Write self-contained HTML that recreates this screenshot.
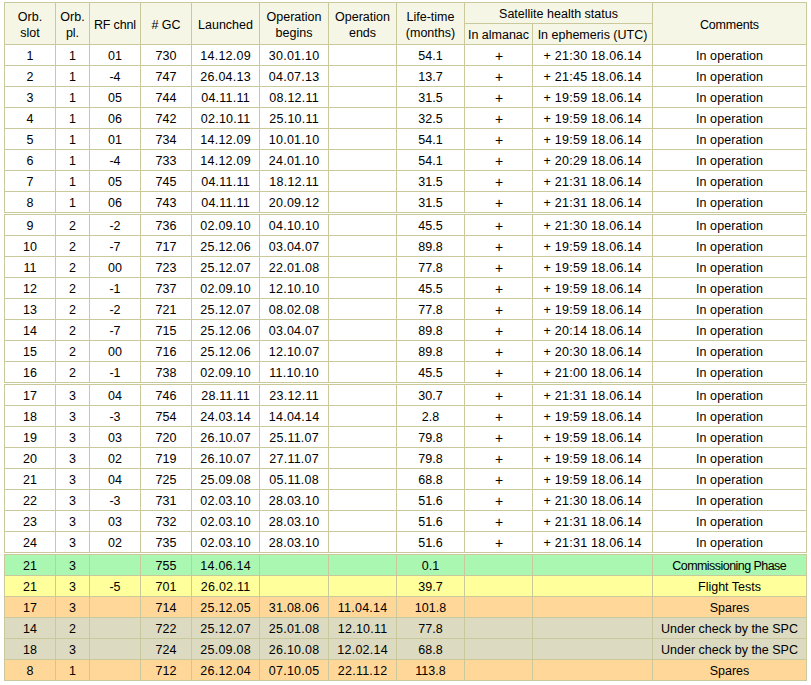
<!DOCTYPE html>
<html><head><meta charset="utf-8"><style>
html,body{margin:0;padding:0;background:#fff;width:811px;height:685px;overflow:hidden}
body{position:relative;font-family:"Liberation Sans",sans-serif;font-size:12.5px;color:#000}
div{position:absolute}
.t{text-align:center;white-space:nowrap;line-height:16px;height:16px}
</style></head><body>
<div style="left:4px;top:2px;width:803px;height:43px;background:#c9c99c"></div>
<div style="left:5px;top:3px;width:801px;height:41px;background:#f6f6e6"></div>
<div style="left:55px;top:2px;width:1px;height:42px;background:#c9c99c"></div>
<div style="left:89px;top:2px;width:1px;height:42px;background:#c9c99c"></div>
<div style="left:140px;top:2px;width:1px;height:42px;background:#c9c99c"></div>
<div style="left:191px;top:2px;width:1px;height:42px;background:#c9c99c"></div>
<div style="left:259px;top:2px;width:1px;height:42px;background:#c9c99c"></div>
<div style="left:328px;top:2px;width:1px;height:42px;background:#c9c99c"></div>
<div style="left:396px;top:2px;width:1px;height:42px;background:#c9c99c"></div>
<div style="left:464px;top:2px;width:1px;height:42px;background:#c9c99c"></div>
<div style="left:532px;top:23px;width:1px;height:21px;background:#c9c99c"></div>
<div style="left:652px;top:2px;width:1px;height:42px;background:#c9c99c"></div>
<div style="left:464px;top:23px;width:188px;height:1px;background:#c9c99c"></div>
<div class="t" style="left:90px;top:17px;width:50px;letter-spacing:-0.15px;text-indent:-0.15px">RF chnl</div>
<div class="t" style="left:141px;top:17px;width:50px"># GC</div>
<div class="t" style="left:192px;top:17px;width:67px">Launched</div>
<div class="t" style="left:653px;top:17px;width:153px;letter-spacing:-0.2px;text-indent:-0.2px">Comments</div>
<div class="t" style="left:5px;top:9px;width:50px">Orb.</div>
<div class="t" style="left:5px;top:25px;width:50px">slot</div>
<div class="t" style="left:56px;top:9px;width:33px">Orb.</div>
<div class="t" style="left:56px;top:25px;width:33px">pl.</div>
<div class="t" style="left:260px;top:9px;width:68px">Operation</div>
<div class="t" style="left:260px;top:25px;width:68px">begins</div>
<div class="t" style="left:329px;top:9px;width:67px">Operation</div>
<div class="t" style="left:329px;top:25px;width:67px">ends</div>
<div class="t" style="left:397px;top:9px;width:67px">Life-time</div>
<div class="t" style="left:397px;top:25px;width:67px">(months)</div>
<div class="t" style="left:465px;top:6px;width:187px">Satellite health status</div>
<div class="t" style="left:465px;top:27px;width:67px">In almanac</div>
<div class="t" style="left:533px;top:27px;width:119px">In ephemeris (UTC)</div>
<div style="left:4px;top:44px;width:803px;height:169px;background:#c9c99c"></div>
<div style="left:5px;top:45px;width:50px;height:20px;background:#fff"></div>
<div style="left:56px;top:45px;width:33px;height:20px;background:#fff"></div>
<div style="left:90px;top:45px;width:50px;height:20px;background:#fff"></div>
<div style="left:141px;top:45px;width:50px;height:20px;background:#fff"></div>
<div style="left:192px;top:45px;width:67px;height:20px;background:#fff"></div>
<div style="left:260px;top:45px;width:68px;height:20px;background:#fff"></div>
<div style="left:329px;top:45px;width:67px;height:20px;background:#fff"></div>
<div style="left:397px;top:45px;width:67px;height:20px;background:#fff"></div>
<div style="left:465px;top:45px;width:67px;height:20px;background:#fff"></div>
<div style="left:533px;top:45px;width:119px;height:20px;background:#fff"></div>
<div style="left:653px;top:45px;width:153px;height:20px;background:#fff"></div>
<div class="t" style="left:5px;top:48px;width:50px">1</div>
<div class="t" style="left:56px;top:48px;width:33px">1</div>
<div class="t" style="left:90px;top:48px;width:50px">01</div>
<div class="t" style="left:141px;top:48px;width:50px">730</div>
<div class="t" style="left:192px;top:48px;width:67px;letter-spacing:0.25px;text-indent:0.25px">14.12.09</div>
<div class="t" style="left:260px;top:48px;width:68px;letter-spacing:0.25px;text-indent:0.25px">30.01.10</div>
<div class="t" style="left:397px;top:48px;width:67px">54.1</div>
<div class="t" style="left:465px;top:48px;width:67px;font-size:14px;text-indent:1px">+</div>
<div class="t" style="left:533px;top:48px;width:119px;letter-spacing:0.25px;text-indent:0.25px">+ 21:30 18.06.14</div>
<div class="t" style="left:653px;top:48px;width:153px;letter-spacing:0.1px;text-indent:0.1px">In operation</div>
<div style="left:5px;top:66px;width:50px;height:20px;background:#fff"></div>
<div style="left:56px;top:66px;width:33px;height:20px;background:#fff"></div>
<div style="left:90px;top:66px;width:50px;height:20px;background:#fff"></div>
<div style="left:141px;top:66px;width:50px;height:20px;background:#fff"></div>
<div style="left:192px;top:66px;width:67px;height:20px;background:#fff"></div>
<div style="left:260px;top:66px;width:68px;height:20px;background:#fff"></div>
<div style="left:329px;top:66px;width:67px;height:20px;background:#fff"></div>
<div style="left:397px;top:66px;width:67px;height:20px;background:#fff"></div>
<div style="left:465px;top:66px;width:67px;height:20px;background:#fff"></div>
<div style="left:533px;top:66px;width:119px;height:20px;background:#fff"></div>
<div style="left:653px;top:66px;width:153px;height:20px;background:#fff"></div>
<div class="t" style="left:5px;top:69px;width:50px">2</div>
<div class="t" style="left:56px;top:69px;width:33px">1</div>
<div class="t" style="left:90px;top:69px;width:50px">-4</div>
<div class="t" style="left:141px;top:69px;width:50px">747</div>
<div class="t" style="left:192px;top:69px;width:67px;letter-spacing:0.25px;text-indent:0.25px">26.04.13</div>
<div class="t" style="left:260px;top:69px;width:68px;letter-spacing:0.25px;text-indent:0.25px">04.07.13</div>
<div class="t" style="left:397px;top:69px;width:67px">13.7</div>
<div class="t" style="left:465px;top:69px;width:67px;font-size:14px;text-indent:1px">+</div>
<div class="t" style="left:533px;top:69px;width:119px;letter-spacing:0.25px;text-indent:0.25px">+ 21:45 18.06.14</div>
<div class="t" style="left:653px;top:69px;width:153px;letter-spacing:0.1px;text-indent:0.1px">In operation</div>
<div style="left:5px;top:87px;width:50px;height:20px;background:#fff"></div>
<div style="left:56px;top:87px;width:33px;height:20px;background:#fff"></div>
<div style="left:90px;top:87px;width:50px;height:20px;background:#fff"></div>
<div style="left:141px;top:87px;width:50px;height:20px;background:#fff"></div>
<div style="left:192px;top:87px;width:67px;height:20px;background:#fff"></div>
<div style="left:260px;top:87px;width:68px;height:20px;background:#fff"></div>
<div style="left:329px;top:87px;width:67px;height:20px;background:#fff"></div>
<div style="left:397px;top:87px;width:67px;height:20px;background:#fff"></div>
<div style="left:465px;top:87px;width:67px;height:20px;background:#fff"></div>
<div style="left:533px;top:87px;width:119px;height:20px;background:#fff"></div>
<div style="left:653px;top:87px;width:153px;height:20px;background:#fff"></div>
<div class="t" style="left:5px;top:90px;width:50px">3</div>
<div class="t" style="left:56px;top:90px;width:33px">1</div>
<div class="t" style="left:90px;top:90px;width:50px">05</div>
<div class="t" style="left:141px;top:90px;width:50px">744</div>
<div class="t" style="left:192px;top:90px;width:67px;letter-spacing:0.25px;text-indent:0.25px">04.11.11</div>
<div class="t" style="left:260px;top:90px;width:68px;letter-spacing:0.25px;text-indent:0.25px">08.12.11</div>
<div class="t" style="left:397px;top:90px;width:67px">31.5</div>
<div class="t" style="left:465px;top:90px;width:67px;font-size:14px;text-indent:1px">+</div>
<div class="t" style="left:533px;top:90px;width:119px;letter-spacing:0.25px;text-indent:0.25px">+ 19:59 18.06.14</div>
<div class="t" style="left:653px;top:90px;width:153px;letter-spacing:0.1px;text-indent:0.1px">In operation</div>
<div style="left:5px;top:108px;width:50px;height:20px;background:#fff"></div>
<div style="left:56px;top:108px;width:33px;height:20px;background:#fff"></div>
<div style="left:90px;top:108px;width:50px;height:20px;background:#fff"></div>
<div style="left:141px;top:108px;width:50px;height:20px;background:#fff"></div>
<div style="left:192px;top:108px;width:67px;height:20px;background:#fff"></div>
<div style="left:260px;top:108px;width:68px;height:20px;background:#fff"></div>
<div style="left:329px;top:108px;width:67px;height:20px;background:#fff"></div>
<div style="left:397px;top:108px;width:67px;height:20px;background:#fff"></div>
<div style="left:465px;top:108px;width:67px;height:20px;background:#fff"></div>
<div style="left:533px;top:108px;width:119px;height:20px;background:#fff"></div>
<div style="left:653px;top:108px;width:153px;height:20px;background:#fff"></div>
<div class="t" style="left:5px;top:111px;width:50px">4</div>
<div class="t" style="left:56px;top:111px;width:33px">1</div>
<div class="t" style="left:90px;top:111px;width:50px">06</div>
<div class="t" style="left:141px;top:111px;width:50px">742</div>
<div class="t" style="left:192px;top:111px;width:67px;letter-spacing:0.25px;text-indent:0.25px">02.10.11</div>
<div class="t" style="left:260px;top:111px;width:68px;letter-spacing:0.25px;text-indent:0.25px">25.10.11</div>
<div class="t" style="left:397px;top:111px;width:67px">32.5</div>
<div class="t" style="left:465px;top:111px;width:67px;font-size:14px;text-indent:1px">+</div>
<div class="t" style="left:533px;top:111px;width:119px;letter-spacing:0.25px;text-indent:0.25px">+ 19:59 18.06.14</div>
<div class="t" style="left:653px;top:111px;width:153px;letter-spacing:0.1px;text-indent:0.1px">In operation</div>
<div style="left:5px;top:129px;width:50px;height:20px;background:#fff"></div>
<div style="left:56px;top:129px;width:33px;height:20px;background:#fff"></div>
<div style="left:90px;top:129px;width:50px;height:20px;background:#fff"></div>
<div style="left:141px;top:129px;width:50px;height:20px;background:#fff"></div>
<div style="left:192px;top:129px;width:67px;height:20px;background:#fff"></div>
<div style="left:260px;top:129px;width:68px;height:20px;background:#fff"></div>
<div style="left:329px;top:129px;width:67px;height:20px;background:#fff"></div>
<div style="left:397px;top:129px;width:67px;height:20px;background:#fff"></div>
<div style="left:465px;top:129px;width:67px;height:20px;background:#fff"></div>
<div style="left:533px;top:129px;width:119px;height:20px;background:#fff"></div>
<div style="left:653px;top:129px;width:153px;height:20px;background:#fff"></div>
<div class="t" style="left:5px;top:132px;width:50px">5</div>
<div class="t" style="left:56px;top:132px;width:33px">1</div>
<div class="t" style="left:90px;top:132px;width:50px">01</div>
<div class="t" style="left:141px;top:132px;width:50px">734</div>
<div class="t" style="left:192px;top:132px;width:67px;letter-spacing:0.25px;text-indent:0.25px">14.12.09</div>
<div class="t" style="left:260px;top:132px;width:68px;letter-spacing:0.25px;text-indent:0.25px">10.01.10</div>
<div class="t" style="left:397px;top:132px;width:67px">54.1</div>
<div class="t" style="left:465px;top:132px;width:67px;font-size:14px;text-indent:1px">+</div>
<div class="t" style="left:533px;top:132px;width:119px;letter-spacing:0.25px;text-indent:0.25px">+ 19:59 18.06.14</div>
<div class="t" style="left:653px;top:132px;width:153px;letter-spacing:0.1px;text-indent:0.1px">In operation</div>
<div style="left:5px;top:150px;width:50px;height:20px;background:#fff"></div>
<div style="left:56px;top:150px;width:33px;height:20px;background:#fff"></div>
<div style="left:90px;top:150px;width:50px;height:20px;background:#fff"></div>
<div style="left:141px;top:150px;width:50px;height:20px;background:#fff"></div>
<div style="left:192px;top:150px;width:67px;height:20px;background:#fff"></div>
<div style="left:260px;top:150px;width:68px;height:20px;background:#fff"></div>
<div style="left:329px;top:150px;width:67px;height:20px;background:#fff"></div>
<div style="left:397px;top:150px;width:67px;height:20px;background:#fff"></div>
<div style="left:465px;top:150px;width:67px;height:20px;background:#fff"></div>
<div style="left:533px;top:150px;width:119px;height:20px;background:#fff"></div>
<div style="left:653px;top:150px;width:153px;height:20px;background:#fff"></div>
<div class="t" style="left:5px;top:153px;width:50px">6</div>
<div class="t" style="left:56px;top:153px;width:33px">1</div>
<div class="t" style="left:90px;top:153px;width:50px">-4</div>
<div class="t" style="left:141px;top:153px;width:50px">733</div>
<div class="t" style="left:192px;top:153px;width:67px;letter-spacing:0.25px;text-indent:0.25px">14.12.09</div>
<div class="t" style="left:260px;top:153px;width:68px;letter-spacing:0.25px;text-indent:0.25px">24.01.10</div>
<div class="t" style="left:397px;top:153px;width:67px">54.1</div>
<div class="t" style="left:465px;top:153px;width:67px;font-size:14px;text-indent:1px">+</div>
<div class="t" style="left:533px;top:153px;width:119px;letter-spacing:0.25px;text-indent:0.25px">+ 20:29 18.06.14</div>
<div class="t" style="left:653px;top:153px;width:153px;letter-spacing:0.1px;text-indent:0.1px">In operation</div>
<div style="left:5px;top:171px;width:50px;height:20px;background:#fff"></div>
<div style="left:56px;top:171px;width:33px;height:20px;background:#fff"></div>
<div style="left:90px;top:171px;width:50px;height:20px;background:#fff"></div>
<div style="left:141px;top:171px;width:50px;height:20px;background:#fff"></div>
<div style="left:192px;top:171px;width:67px;height:20px;background:#fff"></div>
<div style="left:260px;top:171px;width:68px;height:20px;background:#fff"></div>
<div style="left:329px;top:171px;width:67px;height:20px;background:#fff"></div>
<div style="left:397px;top:171px;width:67px;height:20px;background:#fff"></div>
<div style="left:465px;top:171px;width:67px;height:20px;background:#fff"></div>
<div style="left:533px;top:171px;width:119px;height:20px;background:#fff"></div>
<div style="left:653px;top:171px;width:153px;height:20px;background:#fff"></div>
<div class="t" style="left:5px;top:174px;width:50px">7</div>
<div class="t" style="left:56px;top:174px;width:33px">1</div>
<div class="t" style="left:90px;top:174px;width:50px">05</div>
<div class="t" style="left:141px;top:174px;width:50px">745</div>
<div class="t" style="left:192px;top:174px;width:67px;letter-spacing:0.25px;text-indent:0.25px">04.11.11</div>
<div class="t" style="left:260px;top:174px;width:68px;letter-spacing:0.25px;text-indent:0.25px">18.12.11</div>
<div class="t" style="left:397px;top:174px;width:67px">31.5</div>
<div class="t" style="left:465px;top:174px;width:67px;font-size:14px;text-indent:1px">+</div>
<div class="t" style="left:533px;top:174px;width:119px;letter-spacing:0.25px;text-indent:0.25px">+ 21:31 18.06.14</div>
<div class="t" style="left:653px;top:174px;width:153px;letter-spacing:0.1px;text-indent:0.1px">In operation</div>
<div style="left:5px;top:192px;width:50px;height:20px;background:#fff"></div>
<div style="left:56px;top:192px;width:33px;height:20px;background:#fff"></div>
<div style="left:90px;top:192px;width:50px;height:20px;background:#fff"></div>
<div style="left:141px;top:192px;width:50px;height:20px;background:#fff"></div>
<div style="left:192px;top:192px;width:67px;height:20px;background:#fff"></div>
<div style="left:260px;top:192px;width:68px;height:20px;background:#fff"></div>
<div style="left:329px;top:192px;width:67px;height:20px;background:#fff"></div>
<div style="left:397px;top:192px;width:67px;height:20px;background:#fff"></div>
<div style="left:465px;top:192px;width:67px;height:20px;background:#fff"></div>
<div style="left:533px;top:192px;width:119px;height:20px;background:#fff"></div>
<div style="left:653px;top:192px;width:153px;height:20px;background:#fff"></div>
<div class="t" style="left:5px;top:195px;width:50px">8</div>
<div class="t" style="left:56px;top:195px;width:33px">1</div>
<div class="t" style="left:90px;top:195px;width:50px">06</div>
<div class="t" style="left:141px;top:195px;width:50px">743</div>
<div class="t" style="left:192px;top:195px;width:67px;letter-spacing:0.25px;text-indent:0.25px">04.11.11</div>
<div class="t" style="left:260px;top:195px;width:68px;letter-spacing:0.25px;text-indent:0.25px">20.09.12</div>
<div class="t" style="left:397px;top:195px;width:67px">31.5</div>
<div class="t" style="left:465px;top:195px;width:67px;font-size:14px;text-indent:1px">+</div>
<div class="t" style="left:533px;top:195px;width:119px;letter-spacing:0.25px;text-indent:0.25px">+ 21:31 18.06.14</div>
<div class="t" style="left:653px;top:195px;width:153px;letter-spacing:0.1px;text-indent:0.1px">In operation</div>
<div style="left:4px;top:214px;width:803px;height:169px;background:#c9c99c"></div>
<div style="left:5px;top:215px;width:50px;height:20px;background:#fff"></div>
<div style="left:56px;top:215px;width:33px;height:20px;background:#fff"></div>
<div style="left:90px;top:215px;width:50px;height:20px;background:#fff"></div>
<div style="left:141px;top:215px;width:50px;height:20px;background:#fff"></div>
<div style="left:192px;top:215px;width:67px;height:20px;background:#fff"></div>
<div style="left:260px;top:215px;width:68px;height:20px;background:#fff"></div>
<div style="left:329px;top:215px;width:67px;height:20px;background:#fff"></div>
<div style="left:397px;top:215px;width:67px;height:20px;background:#fff"></div>
<div style="left:465px;top:215px;width:67px;height:20px;background:#fff"></div>
<div style="left:533px;top:215px;width:119px;height:20px;background:#fff"></div>
<div style="left:653px;top:215px;width:153px;height:20px;background:#fff"></div>
<div class="t" style="left:5px;top:218px;width:50px">9</div>
<div class="t" style="left:56px;top:218px;width:33px">2</div>
<div class="t" style="left:90px;top:218px;width:50px">-2</div>
<div class="t" style="left:141px;top:218px;width:50px">736</div>
<div class="t" style="left:192px;top:218px;width:67px;letter-spacing:0.25px;text-indent:0.25px">02.09.10</div>
<div class="t" style="left:260px;top:218px;width:68px;letter-spacing:0.25px;text-indent:0.25px">04.10.10</div>
<div class="t" style="left:397px;top:218px;width:67px">45.5</div>
<div class="t" style="left:465px;top:218px;width:67px;font-size:14px;text-indent:1px">+</div>
<div class="t" style="left:533px;top:218px;width:119px;letter-spacing:0.25px;text-indent:0.25px">+ 21:30 18.06.14</div>
<div class="t" style="left:653px;top:218px;width:153px;letter-spacing:0.1px;text-indent:0.1px">In operation</div>
<div style="left:5px;top:236px;width:50px;height:20px;background:#fff"></div>
<div style="left:56px;top:236px;width:33px;height:20px;background:#fff"></div>
<div style="left:90px;top:236px;width:50px;height:20px;background:#fff"></div>
<div style="left:141px;top:236px;width:50px;height:20px;background:#fff"></div>
<div style="left:192px;top:236px;width:67px;height:20px;background:#fff"></div>
<div style="left:260px;top:236px;width:68px;height:20px;background:#fff"></div>
<div style="left:329px;top:236px;width:67px;height:20px;background:#fff"></div>
<div style="left:397px;top:236px;width:67px;height:20px;background:#fff"></div>
<div style="left:465px;top:236px;width:67px;height:20px;background:#fff"></div>
<div style="left:533px;top:236px;width:119px;height:20px;background:#fff"></div>
<div style="left:653px;top:236px;width:153px;height:20px;background:#fff"></div>
<div class="t" style="left:5px;top:239px;width:50px">10</div>
<div class="t" style="left:56px;top:239px;width:33px">2</div>
<div class="t" style="left:90px;top:239px;width:50px">-7</div>
<div class="t" style="left:141px;top:239px;width:50px">717</div>
<div class="t" style="left:192px;top:239px;width:67px;letter-spacing:0.25px;text-indent:0.25px">25.12.06</div>
<div class="t" style="left:260px;top:239px;width:68px;letter-spacing:0.25px;text-indent:0.25px">03.04.07</div>
<div class="t" style="left:397px;top:239px;width:67px">89.8</div>
<div class="t" style="left:465px;top:239px;width:67px;font-size:14px;text-indent:1px">+</div>
<div class="t" style="left:533px;top:239px;width:119px;letter-spacing:0.25px;text-indent:0.25px">+ 19:59 18.06.14</div>
<div class="t" style="left:653px;top:239px;width:153px;letter-spacing:0.1px;text-indent:0.1px">In operation</div>
<div style="left:5px;top:257px;width:50px;height:20px;background:#fff"></div>
<div style="left:56px;top:257px;width:33px;height:20px;background:#fff"></div>
<div style="left:90px;top:257px;width:50px;height:20px;background:#fff"></div>
<div style="left:141px;top:257px;width:50px;height:20px;background:#fff"></div>
<div style="left:192px;top:257px;width:67px;height:20px;background:#fff"></div>
<div style="left:260px;top:257px;width:68px;height:20px;background:#fff"></div>
<div style="left:329px;top:257px;width:67px;height:20px;background:#fff"></div>
<div style="left:397px;top:257px;width:67px;height:20px;background:#fff"></div>
<div style="left:465px;top:257px;width:67px;height:20px;background:#fff"></div>
<div style="left:533px;top:257px;width:119px;height:20px;background:#fff"></div>
<div style="left:653px;top:257px;width:153px;height:20px;background:#fff"></div>
<div class="t" style="left:5px;top:260px;width:50px">11</div>
<div class="t" style="left:56px;top:260px;width:33px">2</div>
<div class="t" style="left:90px;top:260px;width:50px">00</div>
<div class="t" style="left:141px;top:260px;width:50px">723</div>
<div class="t" style="left:192px;top:260px;width:67px;letter-spacing:0.25px;text-indent:0.25px">25.12.07</div>
<div class="t" style="left:260px;top:260px;width:68px;letter-spacing:0.25px;text-indent:0.25px">22.01.08</div>
<div class="t" style="left:397px;top:260px;width:67px">77.8</div>
<div class="t" style="left:465px;top:260px;width:67px;font-size:14px;text-indent:1px">+</div>
<div class="t" style="left:533px;top:260px;width:119px;letter-spacing:0.25px;text-indent:0.25px">+ 19:59 18.06.14</div>
<div class="t" style="left:653px;top:260px;width:153px;letter-spacing:0.1px;text-indent:0.1px">In operation</div>
<div style="left:5px;top:278px;width:50px;height:20px;background:#fff"></div>
<div style="left:56px;top:278px;width:33px;height:20px;background:#fff"></div>
<div style="left:90px;top:278px;width:50px;height:20px;background:#fff"></div>
<div style="left:141px;top:278px;width:50px;height:20px;background:#fff"></div>
<div style="left:192px;top:278px;width:67px;height:20px;background:#fff"></div>
<div style="left:260px;top:278px;width:68px;height:20px;background:#fff"></div>
<div style="left:329px;top:278px;width:67px;height:20px;background:#fff"></div>
<div style="left:397px;top:278px;width:67px;height:20px;background:#fff"></div>
<div style="left:465px;top:278px;width:67px;height:20px;background:#fff"></div>
<div style="left:533px;top:278px;width:119px;height:20px;background:#fff"></div>
<div style="left:653px;top:278px;width:153px;height:20px;background:#fff"></div>
<div class="t" style="left:5px;top:281px;width:50px">12</div>
<div class="t" style="left:56px;top:281px;width:33px">2</div>
<div class="t" style="left:90px;top:281px;width:50px">-1</div>
<div class="t" style="left:141px;top:281px;width:50px">737</div>
<div class="t" style="left:192px;top:281px;width:67px;letter-spacing:0.25px;text-indent:0.25px">02.09.10</div>
<div class="t" style="left:260px;top:281px;width:68px;letter-spacing:0.25px;text-indent:0.25px">12.10.10</div>
<div class="t" style="left:397px;top:281px;width:67px">45.5</div>
<div class="t" style="left:465px;top:281px;width:67px;font-size:14px;text-indent:1px">+</div>
<div class="t" style="left:533px;top:281px;width:119px;letter-spacing:0.25px;text-indent:0.25px">+ 19:59 18.06.14</div>
<div class="t" style="left:653px;top:281px;width:153px;letter-spacing:0.1px;text-indent:0.1px">In operation</div>
<div style="left:5px;top:299px;width:50px;height:20px;background:#fff"></div>
<div style="left:56px;top:299px;width:33px;height:20px;background:#fff"></div>
<div style="left:90px;top:299px;width:50px;height:20px;background:#fff"></div>
<div style="left:141px;top:299px;width:50px;height:20px;background:#fff"></div>
<div style="left:192px;top:299px;width:67px;height:20px;background:#fff"></div>
<div style="left:260px;top:299px;width:68px;height:20px;background:#fff"></div>
<div style="left:329px;top:299px;width:67px;height:20px;background:#fff"></div>
<div style="left:397px;top:299px;width:67px;height:20px;background:#fff"></div>
<div style="left:465px;top:299px;width:67px;height:20px;background:#fff"></div>
<div style="left:533px;top:299px;width:119px;height:20px;background:#fff"></div>
<div style="left:653px;top:299px;width:153px;height:20px;background:#fff"></div>
<div class="t" style="left:5px;top:302px;width:50px">13</div>
<div class="t" style="left:56px;top:302px;width:33px">2</div>
<div class="t" style="left:90px;top:302px;width:50px">-2</div>
<div class="t" style="left:141px;top:302px;width:50px">721</div>
<div class="t" style="left:192px;top:302px;width:67px;letter-spacing:0.25px;text-indent:0.25px">25.12.07</div>
<div class="t" style="left:260px;top:302px;width:68px;letter-spacing:0.25px;text-indent:0.25px">08.02.08</div>
<div class="t" style="left:397px;top:302px;width:67px">77.8</div>
<div class="t" style="left:465px;top:302px;width:67px;font-size:14px;text-indent:1px">+</div>
<div class="t" style="left:533px;top:302px;width:119px;letter-spacing:0.25px;text-indent:0.25px">+ 19:59 18.06.14</div>
<div class="t" style="left:653px;top:302px;width:153px;letter-spacing:0.1px;text-indent:0.1px">In operation</div>
<div style="left:5px;top:320px;width:50px;height:20px;background:#fff"></div>
<div style="left:56px;top:320px;width:33px;height:20px;background:#fff"></div>
<div style="left:90px;top:320px;width:50px;height:20px;background:#fff"></div>
<div style="left:141px;top:320px;width:50px;height:20px;background:#fff"></div>
<div style="left:192px;top:320px;width:67px;height:20px;background:#fff"></div>
<div style="left:260px;top:320px;width:68px;height:20px;background:#fff"></div>
<div style="left:329px;top:320px;width:67px;height:20px;background:#fff"></div>
<div style="left:397px;top:320px;width:67px;height:20px;background:#fff"></div>
<div style="left:465px;top:320px;width:67px;height:20px;background:#fff"></div>
<div style="left:533px;top:320px;width:119px;height:20px;background:#fff"></div>
<div style="left:653px;top:320px;width:153px;height:20px;background:#fff"></div>
<div class="t" style="left:5px;top:323px;width:50px">14</div>
<div class="t" style="left:56px;top:323px;width:33px">2</div>
<div class="t" style="left:90px;top:323px;width:50px">-7</div>
<div class="t" style="left:141px;top:323px;width:50px">715</div>
<div class="t" style="left:192px;top:323px;width:67px;letter-spacing:0.25px;text-indent:0.25px">25.12.06</div>
<div class="t" style="left:260px;top:323px;width:68px;letter-spacing:0.25px;text-indent:0.25px">03.04.07</div>
<div class="t" style="left:397px;top:323px;width:67px">89.8</div>
<div class="t" style="left:465px;top:323px;width:67px;font-size:14px;text-indent:1px">+</div>
<div class="t" style="left:533px;top:323px;width:119px;letter-spacing:0.25px;text-indent:0.25px">+ 20:14 18.06.14</div>
<div class="t" style="left:653px;top:323px;width:153px;letter-spacing:0.1px;text-indent:0.1px">In operation</div>
<div style="left:5px;top:341px;width:50px;height:20px;background:#fff"></div>
<div style="left:56px;top:341px;width:33px;height:20px;background:#fff"></div>
<div style="left:90px;top:341px;width:50px;height:20px;background:#fff"></div>
<div style="left:141px;top:341px;width:50px;height:20px;background:#fff"></div>
<div style="left:192px;top:341px;width:67px;height:20px;background:#fff"></div>
<div style="left:260px;top:341px;width:68px;height:20px;background:#fff"></div>
<div style="left:329px;top:341px;width:67px;height:20px;background:#fff"></div>
<div style="left:397px;top:341px;width:67px;height:20px;background:#fff"></div>
<div style="left:465px;top:341px;width:67px;height:20px;background:#fff"></div>
<div style="left:533px;top:341px;width:119px;height:20px;background:#fff"></div>
<div style="left:653px;top:341px;width:153px;height:20px;background:#fff"></div>
<div class="t" style="left:5px;top:344px;width:50px">15</div>
<div class="t" style="left:56px;top:344px;width:33px">2</div>
<div class="t" style="left:90px;top:344px;width:50px">00</div>
<div class="t" style="left:141px;top:344px;width:50px">716</div>
<div class="t" style="left:192px;top:344px;width:67px;letter-spacing:0.25px;text-indent:0.25px">25.12.06</div>
<div class="t" style="left:260px;top:344px;width:68px;letter-spacing:0.25px;text-indent:0.25px">12.10.07</div>
<div class="t" style="left:397px;top:344px;width:67px">89.8</div>
<div class="t" style="left:465px;top:344px;width:67px;font-size:14px;text-indent:1px">+</div>
<div class="t" style="left:533px;top:344px;width:119px;letter-spacing:0.25px;text-indent:0.25px">+ 20:30 18.06.14</div>
<div class="t" style="left:653px;top:344px;width:153px;letter-spacing:0.1px;text-indent:0.1px">In operation</div>
<div style="left:5px;top:362px;width:50px;height:20px;background:#fff"></div>
<div style="left:56px;top:362px;width:33px;height:20px;background:#fff"></div>
<div style="left:90px;top:362px;width:50px;height:20px;background:#fff"></div>
<div style="left:141px;top:362px;width:50px;height:20px;background:#fff"></div>
<div style="left:192px;top:362px;width:67px;height:20px;background:#fff"></div>
<div style="left:260px;top:362px;width:68px;height:20px;background:#fff"></div>
<div style="left:329px;top:362px;width:67px;height:20px;background:#fff"></div>
<div style="left:397px;top:362px;width:67px;height:20px;background:#fff"></div>
<div style="left:465px;top:362px;width:67px;height:20px;background:#fff"></div>
<div style="left:533px;top:362px;width:119px;height:20px;background:#fff"></div>
<div style="left:653px;top:362px;width:153px;height:20px;background:#fff"></div>
<div class="t" style="left:5px;top:365px;width:50px">16</div>
<div class="t" style="left:56px;top:365px;width:33px">2</div>
<div class="t" style="left:90px;top:365px;width:50px">-1</div>
<div class="t" style="left:141px;top:365px;width:50px">738</div>
<div class="t" style="left:192px;top:365px;width:67px;letter-spacing:0.25px;text-indent:0.25px">02.09.10</div>
<div class="t" style="left:260px;top:365px;width:68px;letter-spacing:0.25px;text-indent:0.25px">11.10.10</div>
<div class="t" style="left:397px;top:365px;width:67px">45.5</div>
<div class="t" style="left:465px;top:365px;width:67px;font-size:14px;text-indent:1px">+</div>
<div class="t" style="left:533px;top:365px;width:119px;letter-spacing:0.25px;text-indent:0.25px">+ 21:00 18.06.14</div>
<div class="t" style="left:653px;top:365px;width:153px;letter-spacing:0.1px;text-indent:0.1px">In operation</div>
<div style="left:4px;top:384px;width:803px;height:169px;background:#c9c99c"></div>
<div style="left:5px;top:385px;width:50px;height:20px;background:#fff"></div>
<div style="left:56px;top:385px;width:33px;height:20px;background:#fff"></div>
<div style="left:90px;top:385px;width:50px;height:20px;background:#fff"></div>
<div style="left:141px;top:385px;width:50px;height:20px;background:#fff"></div>
<div style="left:192px;top:385px;width:67px;height:20px;background:#fff"></div>
<div style="left:260px;top:385px;width:68px;height:20px;background:#fff"></div>
<div style="left:329px;top:385px;width:67px;height:20px;background:#fff"></div>
<div style="left:397px;top:385px;width:67px;height:20px;background:#fff"></div>
<div style="left:465px;top:385px;width:67px;height:20px;background:#fff"></div>
<div style="left:533px;top:385px;width:119px;height:20px;background:#fff"></div>
<div style="left:653px;top:385px;width:153px;height:20px;background:#fff"></div>
<div class="t" style="left:5px;top:388px;width:50px">17</div>
<div class="t" style="left:56px;top:388px;width:33px">3</div>
<div class="t" style="left:90px;top:388px;width:50px">04</div>
<div class="t" style="left:141px;top:388px;width:50px">746</div>
<div class="t" style="left:192px;top:388px;width:67px;letter-spacing:0.25px;text-indent:0.25px">28.11.11</div>
<div class="t" style="left:260px;top:388px;width:68px;letter-spacing:0.25px;text-indent:0.25px">23.12.11</div>
<div class="t" style="left:397px;top:388px;width:67px">30.7</div>
<div class="t" style="left:465px;top:388px;width:67px;font-size:14px;text-indent:1px">+</div>
<div class="t" style="left:533px;top:388px;width:119px;letter-spacing:0.25px;text-indent:0.25px">+ 21:31 18.06.14</div>
<div class="t" style="left:653px;top:388px;width:153px;letter-spacing:0.1px;text-indent:0.1px">In operation</div>
<div style="left:5px;top:406px;width:50px;height:20px;background:#fff"></div>
<div style="left:56px;top:406px;width:33px;height:20px;background:#fff"></div>
<div style="left:90px;top:406px;width:50px;height:20px;background:#fff"></div>
<div style="left:141px;top:406px;width:50px;height:20px;background:#fff"></div>
<div style="left:192px;top:406px;width:67px;height:20px;background:#fff"></div>
<div style="left:260px;top:406px;width:68px;height:20px;background:#fff"></div>
<div style="left:329px;top:406px;width:67px;height:20px;background:#fff"></div>
<div style="left:397px;top:406px;width:67px;height:20px;background:#fff"></div>
<div style="left:465px;top:406px;width:67px;height:20px;background:#fff"></div>
<div style="left:533px;top:406px;width:119px;height:20px;background:#fff"></div>
<div style="left:653px;top:406px;width:153px;height:20px;background:#fff"></div>
<div class="t" style="left:5px;top:409px;width:50px">18</div>
<div class="t" style="left:56px;top:409px;width:33px">3</div>
<div class="t" style="left:90px;top:409px;width:50px">-3</div>
<div class="t" style="left:141px;top:409px;width:50px">754</div>
<div class="t" style="left:192px;top:409px;width:67px;letter-spacing:0.25px;text-indent:0.25px">24.03.14</div>
<div class="t" style="left:260px;top:409px;width:68px;letter-spacing:0.25px;text-indent:0.25px">14.04.14</div>
<div class="t" style="left:397px;top:409px;width:67px">2.8</div>
<div class="t" style="left:465px;top:409px;width:67px;font-size:14px;text-indent:1px">+</div>
<div class="t" style="left:533px;top:409px;width:119px;letter-spacing:0.25px;text-indent:0.25px">+ 19:59 18.06.14</div>
<div class="t" style="left:653px;top:409px;width:153px;letter-spacing:0.1px;text-indent:0.1px">In operation</div>
<div style="left:5px;top:427px;width:50px;height:20px;background:#fff"></div>
<div style="left:56px;top:427px;width:33px;height:20px;background:#fff"></div>
<div style="left:90px;top:427px;width:50px;height:20px;background:#fff"></div>
<div style="left:141px;top:427px;width:50px;height:20px;background:#fff"></div>
<div style="left:192px;top:427px;width:67px;height:20px;background:#fff"></div>
<div style="left:260px;top:427px;width:68px;height:20px;background:#fff"></div>
<div style="left:329px;top:427px;width:67px;height:20px;background:#fff"></div>
<div style="left:397px;top:427px;width:67px;height:20px;background:#fff"></div>
<div style="left:465px;top:427px;width:67px;height:20px;background:#fff"></div>
<div style="left:533px;top:427px;width:119px;height:20px;background:#fff"></div>
<div style="left:653px;top:427px;width:153px;height:20px;background:#fff"></div>
<div class="t" style="left:5px;top:430px;width:50px">19</div>
<div class="t" style="left:56px;top:430px;width:33px">3</div>
<div class="t" style="left:90px;top:430px;width:50px">03</div>
<div class="t" style="left:141px;top:430px;width:50px">720</div>
<div class="t" style="left:192px;top:430px;width:67px;letter-spacing:0.25px;text-indent:0.25px">26.10.07</div>
<div class="t" style="left:260px;top:430px;width:68px;letter-spacing:0.25px;text-indent:0.25px">25.11.07</div>
<div class="t" style="left:397px;top:430px;width:67px">79.8</div>
<div class="t" style="left:465px;top:430px;width:67px;font-size:14px;text-indent:1px">+</div>
<div class="t" style="left:533px;top:430px;width:119px;letter-spacing:0.25px;text-indent:0.25px">+ 19:59 18.06.14</div>
<div class="t" style="left:653px;top:430px;width:153px;letter-spacing:0.1px;text-indent:0.1px">In operation</div>
<div style="left:5px;top:448px;width:50px;height:20px;background:#fff"></div>
<div style="left:56px;top:448px;width:33px;height:20px;background:#fff"></div>
<div style="left:90px;top:448px;width:50px;height:20px;background:#fff"></div>
<div style="left:141px;top:448px;width:50px;height:20px;background:#fff"></div>
<div style="left:192px;top:448px;width:67px;height:20px;background:#fff"></div>
<div style="left:260px;top:448px;width:68px;height:20px;background:#fff"></div>
<div style="left:329px;top:448px;width:67px;height:20px;background:#fff"></div>
<div style="left:397px;top:448px;width:67px;height:20px;background:#fff"></div>
<div style="left:465px;top:448px;width:67px;height:20px;background:#fff"></div>
<div style="left:533px;top:448px;width:119px;height:20px;background:#fff"></div>
<div style="left:653px;top:448px;width:153px;height:20px;background:#fff"></div>
<div class="t" style="left:5px;top:451px;width:50px">20</div>
<div class="t" style="left:56px;top:451px;width:33px">3</div>
<div class="t" style="left:90px;top:451px;width:50px">02</div>
<div class="t" style="left:141px;top:451px;width:50px">719</div>
<div class="t" style="left:192px;top:451px;width:67px;letter-spacing:0.25px;text-indent:0.25px">26.10.07</div>
<div class="t" style="left:260px;top:451px;width:68px;letter-spacing:0.25px;text-indent:0.25px">27.11.07</div>
<div class="t" style="left:397px;top:451px;width:67px">79.8</div>
<div class="t" style="left:465px;top:451px;width:67px;font-size:14px;text-indent:1px">+</div>
<div class="t" style="left:533px;top:451px;width:119px;letter-spacing:0.25px;text-indent:0.25px">+ 19:59 18.06.14</div>
<div class="t" style="left:653px;top:451px;width:153px;letter-spacing:0.1px;text-indent:0.1px">In operation</div>
<div style="left:5px;top:469px;width:50px;height:20px;background:#fff"></div>
<div style="left:56px;top:469px;width:33px;height:20px;background:#fff"></div>
<div style="left:90px;top:469px;width:50px;height:20px;background:#fff"></div>
<div style="left:141px;top:469px;width:50px;height:20px;background:#fff"></div>
<div style="left:192px;top:469px;width:67px;height:20px;background:#fff"></div>
<div style="left:260px;top:469px;width:68px;height:20px;background:#fff"></div>
<div style="left:329px;top:469px;width:67px;height:20px;background:#fff"></div>
<div style="left:397px;top:469px;width:67px;height:20px;background:#fff"></div>
<div style="left:465px;top:469px;width:67px;height:20px;background:#fff"></div>
<div style="left:533px;top:469px;width:119px;height:20px;background:#fff"></div>
<div style="left:653px;top:469px;width:153px;height:20px;background:#fff"></div>
<div class="t" style="left:5px;top:472px;width:50px">21</div>
<div class="t" style="left:56px;top:472px;width:33px">3</div>
<div class="t" style="left:90px;top:472px;width:50px">04</div>
<div class="t" style="left:141px;top:472px;width:50px">725</div>
<div class="t" style="left:192px;top:472px;width:67px;letter-spacing:0.25px;text-indent:0.25px">25.09.08</div>
<div class="t" style="left:260px;top:472px;width:68px;letter-spacing:0.25px;text-indent:0.25px">05.11.08</div>
<div class="t" style="left:397px;top:472px;width:67px">68.8</div>
<div class="t" style="left:465px;top:472px;width:67px;font-size:14px;text-indent:1px">+</div>
<div class="t" style="left:533px;top:472px;width:119px;letter-spacing:0.25px;text-indent:0.25px">+ 19:59 18.06.14</div>
<div class="t" style="left:653px;top:472px;width:153px;letter-spacing:0.1px;text-indent:0.1px">In operation</div>
<div style="left:5px;top:490px;width:50px;height:20px;background:#fff"></div>
<div style="left:56px;top:490px;width:33px;height:20px;background:#fff"></div>
<div style="left:90px;top:490px;width:50px;height:20px;background:#fff"></div>
<div style="left:141px;top:490px;width:50px;height:20px;background:#fff"></div>
<div style="left:192px;top:490px;width:67px;height:20px;background:#fff"></div>
<div style="left:260px;top:490px;width:68px;height:20px;background:#fff"></div>
<div style="left:329px;top:490px;width:67px;height:20px;background:#fff"></div>
<div style="left:397px;top:490px;width:67px;height:20px;background:#fff"></div>
<div style="left:465px;top:490px;width:67px;height:20px;background:#fff"></div>
<div style="left:533px;top:490px;width:119px;height:20px;background:#fff"></div>
<div style="left:653px;top:490px;width:153px;height:20px;background:#fff"></div>
<div class="t" style="left:5px;top:493px;width:50px">22</div>
<div class="t" style="left:56px;top:493px;width:33px">3</div>
<div class="t" style="left:90px;top:493px;width:50px">-3</div>
<div class="t" style="left:141px;top:493px;width:50px">731</div>
<div class="t" style="left:192px;top:493px;width:67px;letter-spacing:0.25px;text-indent:0.25px">02.03.10</div>
<div class="t" style="left:260px;top:493px;width:68px;letter-spacing:0.25px;text-indent:0.25px">28.03.10</div>
<div class="t" style="left:397px;top:493px;width:67px">51.6</div>
<div class="t" style="left:465px;top:493px;width:67px;font-size:14px;text-indent:1px">+</div>
<div class="t" style="left:533px;top:493px;width:119px;letter-spacing:0.25px;text-indent:0.25px">+ 21:30 18.06.14</div>
<div class="t" style="left:653px;top:493px;width:153px;letter-spacing:0.1px;text-indent:0.1px">In operation</div>
<div style="left:5px;top:511px;width:50px;height:20px;background:#fff"></div>
<div style="left:56px;top:511px;width:33px;height:20px;background:#fff"></div>
<div style="left:90px;top:511px;width:50px;height:20px;background:#fff"></div>
<div style="left:141px;top:511px;width:50px;height:20px;background:#fff"></div>
<div style="left:192px;top:511px;width:67px;height:20px;background:#fff"></div>
<div style="left:260px;top:511px;width:68px;height:20px;background:#fff"></div>
<div style="left:329px;top:511px;width:67px;height:20px;background:#fff"></div>
<div style="left:397px;top:511px;width:67px;height:20px;background:#fff"></div>
<div style="left:465px;top:511px;width:67px;height:20px;background:#fff"></div>
<div style="left:533px;top:511px;width:119px;height:20px;background:#fff"></div>
<div style="left:653px;top:511px;width:153px;height:20px;background:#fff"></div>
<div class="t" style="left:5px;top:514px;width:50px">23</div>
<div class="t" style="left:56px;top:514px;width:33px">3</div>
<div class="t" style="left:90px;top:514px;width:50px">03</div>
<div class="t" style="left:141px;top:514px;width:50px">732</div>
<div class="t" style="left:192px;top:514px;width:67px;letter-spacing:0.25px;text-indent:0.25px">02.03.10</div>
<div class="t" style="left:260px;top:514px;width:68px;letter-spacing:0.25px;text-indent:0.25px">28.03.10</div>
<div class="t" style="left:397px;top:514px;width:67px">51.6</div>
<div class="t" style="left:465px;top:514px;width:67px;font-size:14px;text-indent:1px">+</div>
<div class="t" style="left:533px;top:514px;width:119px;letter-spacing:0.25px;text-indent:0.25px">+ 21:31 18.06.14</div>
<div class="t" style="left:653px;top:514px;width:153px;letter-spacing:0.1px;text-indent:0.1px">In operation</div>
<div style="left:5px;top:532px;width:50px;height:20px;background:#fff"></div>
<div style="left:56px;top:532px;width:33px;height:20px;background:#fff"></div>
<div style="left:90px;top:532px;width:50px;height:20px;background:#fff"></div>
<div style="left:141px;top:532px;width:50px;height:20px;background:#fff"></div>
<div style="left:192px;top:532px;width:67px;height:20px;background:#fff"></div>
<div style="left:260px;top:532px;width:68px;height:20px;background:#fff"></div>
<div style="left:329px;top:532px;width:67px;height:20px;background:#fff"></div>
<div style="left:397px;top:532px;width:67px;height:20px;background:#fff"></div>
<div style="left:465px;top:532px;width:67px;height:20px;background:#fff"></div>
<div style="left:533px;top:532px;width:119px;height:20px;background:#fff"></div>
<div style="left:653px;top:532px;width:153px;height:20px;background:#fff"></div>
<div class="t" style="left:5px;top:535px;width:50px">24</div>
<div class="t" style="left:56px;top:535px;width:33px">3</div>
<div class="t" style="left:90px;top:535px;width:50px">02</div>
<div class="t" style="left:141px;top:535px;width:50px">735</div>
<div class="t" style="left:192px;top:535px;width:67px;letter-spacing:0.25px;text-indent:0.25px">02.03.10</div>
<div class="t" style="left:260px;top:535px;width:68px;letter-spacing:0.25px;text-indent:0.25px">28.03.10</div>
<div class="t" style="left:397px;top:535px;width:67px">51.6</div>
<div class="t" style="left:465px;top:535px;width:67px;font-size:14px;text-indent:1px">+</div>
<div class="t" style="left:533px;top:535px;width:119px;letter-spacing:0.25px;text-indent:0.25px">+ 21:31 18.06.14</div>
<div class="t" style="left:653px;top:535px;width:153px;letter-spacing:0.1px;text-indent:0.1px">In operation</div>
<div style="left:4px;top:554px;width:803px;height:127px;background:#c9c99c"></div>
<div style="left:5px;top:555px;width:50px;height:20px;background:#aaf7b2"></div>
<div style="left:56px;top:555px;width:33px;height:20px;background:#aaf7b2"></div>
<div style="left:90px;top:555px;width:50px;height:20px;background:#aaf7b2"></div>
<div style="left:141px;top:555px;width:50px;height:20px;background:#aaf7b2"></div>
<div style="left:192px;top:555px;width:67px;height:20px;background:#aaf7b2"></div>
<div style="left:260px;top:555px;width:68px;height:20px;background:#aaf7b2"></div>
<div style="left:329px;top:555px;width:67px;height:20px;background:#aaf7b2"></div>
<div style="left:397px;top:555px;width:67px;height:20px;background:#aaf7b2"></div>
<div style="left:465px;top:555px;width:67px;height:20px;background:#aaf7b2"></div>
<div style="left:533px;top:555px;width:119px;height:20px;background:#aaf7b2"></div>
<div style="left:653px;top:555px;width:153px;height:20px;background:#aaf7b2"></div>
<div class="t" style="left:5px;top:558px;width:50px">21</div>
<div class="t" style="left:56px;top:558px;width:33px">3</div>
<div class="t" style="left:141px;top:558px;width:50px">755</div>
<div class="t" style="left:192px;top:558px;width:67px;letter-spacing:0.25px;text-indent:0.25px">14.06.14</div>
<div class="t" style="left:397px;top:558px;width:67px">0.1</div>
<div class="t" style="left:653px;top:558px;width:153px;letter-spacing:-0.55px;text-indent:-0.55px">Commissioning Phase</div>
<div style="left:5px;top:576px;width:50px;height:20px;background:#ffff9c"></div>
<div style="left:56px;top:576px;width:33px;height:20px;background:#ffff9c"></div>
<div style="left:90px;top:576px;width:50px;height:20px;background:#ffff9c"></div>
<div style="left:141px;top:576px;width:50px;height:20px;background:#ffff9c"></div>
<div style="left:192px;top:576px;width:67px;height:20px;background:#ffff9c"></div>
<div style="left:260px;top:576px;width:68px;height:20px;background:#ffff9c"></div>
<div style="left:329px;top:576px;width:67px;height:20px;background:#ffff9c"></div>
<div style="left:397px;top:576px;width:67px;height:20px;background:#ffff9c"></div>
<div style="left:465px;top:576px;width:67px;height:20px;background:#ffff9c"></div>
<div style="left:533px;top:576px;width:119px;height:20px;background:#ffff9c"></div>
<div style="left:653px;top:576px;width:153px;height:20px;background:#ffff9c"></div>
<div class="t" style="left:5px;top:579px;width:50px">21</div>
<div class="t" style="left:56px;top:579px;width:33px">3</div>
<div class="t" style="left:90px;top:579px;width:50px">-5</div>
<div class="t" style="left:141px;top:579px;width:50px">701</div>
<div class="t" style="left:192px;top:579px;width:67px;letter-spacing:0.25px;text-indent:0.25px">26.02.11</div>
<div class="t" style="left:397px;top:579px;width:67px">39.7</div>
<div class="t" style="left:653px;top:579px;width:153px">Flight Tests</div>
<div style="left:5px;top:597px;width:50px;height:20px;background:#ffd899"></div>
<div style="left:56px;top:597px;width:33px;height:20px;background:#ffd899"></div>
<div style="left:90px;top:597px;width:50px;height:20px;background:#ffd899"></div>
<div style="left:141px;top:597px;width:50px;height:20px;background:#ffd899"></div>
<div style="left:192px;top:597px;width:67px;height:20px;background:#ffd899"></div>
<div style="left:260px;top:597px;width:68px;height:20px;background:#ffd899"></div>
<div style="left:329px;top:597px;width:67px;height:20px;background:#ffd899"></div>
<div style="left:397px;top:597px;width:67px;height:20px;background:#ffd899"></div>
<div style="left:465px;top:597px;width:67px;height:20px;background:#ffd899"></div>
<div style="left:533px;top:597px;width:119px;height:20px;background:#ffd899"></div>
<div style="left:653px;top:597px;width:153px;height:20px;background:#ffd899"></div>
<div class="t" style="left:5px;top:600px;width:50px">17</div>
<div class="t" style="left:56px;top:600px;width:33px">3</div>
<div class="t" style="left:141px;top:600px;width:50px">714</div>
<div class="t" style="left:192px;top:600px;width:67px;letter-spacing:0.25px;text-indent:0.25px">25.12.05</div>
<div class="t" style="left:260px;top:600px;width:68px;letter-spacing:0.25px;text-indent:0.25px">31.08.06</div>
<div class="t" style="left:329px;top:600px;width:67px;letter-spacing:0.25px;text-indent:0.25px">11.04.14</div>
<div class="t" style="left:397px;top:600px;width:67px">101.8</div>
<div class="t" style="left:653px;top:600px;width:153px">Spares</div>
<div style="left:5px;top:618px;width:50px;height:20px;background:#dcdac0"></div>
<div style="left:56px;top:618px;width:33px;height:20px;background:#dcdac0"></div>
<div style="left:90px;top:618px;width:50px;height:20px;background:#dcdac0"></div>
<div style="left:141px;top:618px;width:50px;height:20px;background:#dcdac0"></div>
<div style="left:192px;top:618px;width:67px;height:20px;background:#dcdac0"></div>
<div style="left:260px;top:618px;width:68px;height:20px;background:#dcdac0"></div>
<div style="left:329px;top:618px;width:67px;height:20px;background:#dcdac0"></div>
<div style="left:397px;top:618px;width:67px;height:20px;background:#dcdac0"></div>
<div style="left:465px;top:618px;width:67px;height:20px;background:#dcdac0"></div>
<div style="left:533px;top:618px;width:119px;height:20px;background:#dcdac0"></div>
<div style="left:653px;top:618px;width:153px;height:20px;background:#dcdac0"></div>
<div class="t" style="left:5px;top:621px;width:50px">14</div>
<div class="t" style="left:56px;top:621px;width:33px">2</div>
<div class="t" style="left:141px;top:621px;width:50px">722</div>
<div class="t" style="left:192px;top:621px;width:67px;letter-spacing:0.25px;text-indent:0.25px">25.12.07</div>
<div class="t" style="left:260px;top:621px;width:68px;letter-spacing:0.25px;text-indent:0.25px">25.01.08</div>
<div class="t" style="left:329px;top:621px;width:67px;letter-spacing:0.25px;text-indent:0.25px">12.10.11</div>
<div class="t" style="left:397px;top:621px;width:67px">77.8</div>
<div class="t" style="left:653px;top:621px;width:153px">Under check by the SPC</div>
<div style="left:5px;top:639px;width:50px;height:20px;background:#dcdac0"></div>
<div style="left:56px;top:639px;width:33px;height:20px;background:#dcdac0"></div>
<div style="left:90px;top:639px;width:50px;height:20px;background:#dcdac0"></div>
<div style="left:141px;top:639px;width:50px;height:20px;background:#dcdac0"></div>
<div style="left:192px;top:639px;width:67px;height:20px;background:#dcdac0"></div>
<div style="left:260px;top:639px;width:68px;height:20px;background:#dcdac0"></div>
<div style="left:329px;top:639px;width:67px;height:20px;background:#dcdac0"></div>
<div style="left:397px;top:639px;width:67px;height:20px;background:#dcdac0"></div>
<div style="left:465px;top:639px;width:67px;height:20px;background:#dcdac0"></div>
<div style="left:533px;top:639px;width:119px;height:20px;background:#dcdac0"></div>
<div style="left:653px;top:639px;width:153px;height:20px;background:#dcdac0"></div>
<div class="t" style="left:5px;top:642px;width:50px">18</div>
<div class="t" style="left:56px;top:642px;width:33px">3</div>
<div class="t" style="left:141px;top:642px;width:50px">724</div>
<div class="t" style="left:192px;top:642px;width:67px;letter-spacing:0.25px;text-indent:0.25px">25.09.08</div>
<div class="t" style="left:260px;top:642px;width:68px;letter-spacing:0.25px;text-indent:0.25px">26.10.08</div>
<div class="t" style="left:329px;top:642px;width:67px;letter-spacing:0.25px;text-indent:0.25px">12.02.14</div>
<div class="t" style="left:397px;top:642px;width:67px">68.8</div>
<div class="t" style="left:653px;top:642px;width:153px">Under check by the SPC</div>
<div style="left:5px;top:660px;width:50px;height:20px;background:#ffd899"></div>
<div style="left:56px;top:660px;width:33px;height:20px;background:#ffd899"></div>
<div style="left:90px;top:660px;width:50px;height:20px;background:#ffd899"></div>
<div style="left:141px;top:660px;width:50px;height:20px;background:#ffd899"></div>
<div style="left:192px;top:660px;width:67px;height:20px;background:#ffd899"></div>
<div style="left:260px;top:660px;width:68px;height:20px;background:#ffd899"></div>
<div style="left:329px;top:660px;width:67px;height:20px;background:#ffd899"></div>
<div style="left:397px;top:660px;width:67px;height:20px;background:#ffd899"></div>
<div style="left:465px;top:660px;width:67px;height:20px;background:#ffd899"></div>
<div style="left:533px;top:660px;width:119px;height:20px;background:#ffd899"></div>
<div style="left:653px;top:660px;width:153px;height:20px;background:#ffd899"></div>
<div class="t" style="left:5px;top:663px;width:50px">8</div>
<div class="t" style="left:56px;top:663px;width:33px">1</div>
<div class="t" style="left:141px;top:663px;width:50px">712</div>
<div class="t" style="left:192px;top:663px;width:67px;letter-spacing:0.25px;text-indent:0.25px">26.12.04</div>
<div class="t" style="left:260px;top:663px;width:68px;letter-spacing:0.25px;text-indent:0.25px">07.10.05</div>
<div class="t" style="left:329px;top:663px;width:67px;letter-spacing:0.25px;text-indent:0.25px">22.11.12</div>
<div class="t" style="left:397px;top:663px;width:67px">113.8</div>
<div class="t" style="left:653px;top:663px;width:153px">Spares</div>
</body></html>
